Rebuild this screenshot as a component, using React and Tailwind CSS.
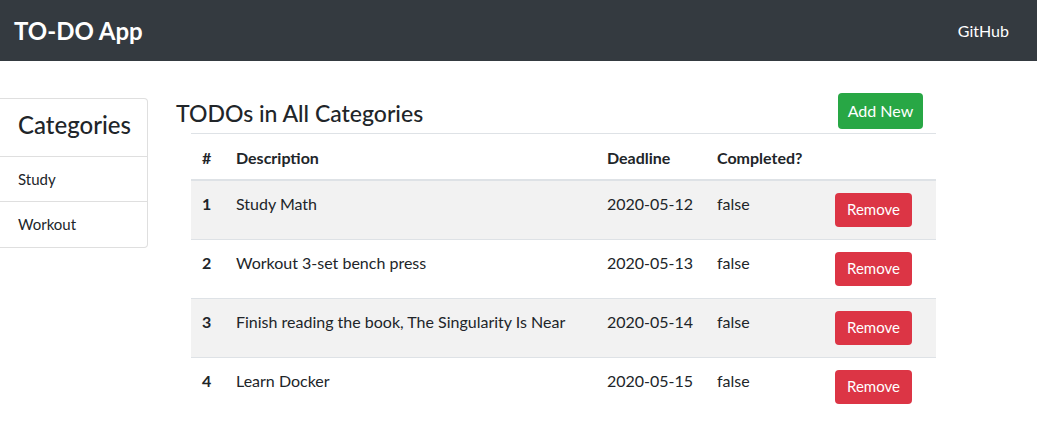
import React from "react";

const todos = [
  { id: 1, description: "Study Math", deadline: "2020-05-12", completed: "false" },
  { id: 2, description: "Workout 3-set bench press", deadline: "2020-05-13", completed: "false" },
  { id: 3, description: "Finish reading the book, The Singularity Is Near", deadline: "2020-05-14", completed: "false" },
  { id: 4, description: "Learn Docker", deadline: "2020-05-15", completed: "false" },
];

const categories = ["Study", "Workout"];

const App = () => {
  return (
    <div className="min-h-screen bg-white text-[#212529]" style={{ fontFamily: "Lato, 'Open Sans', sans-serif" }}>
      <nav className="flex h-[61px] items-center justify-between bg-[#343a40] pl-[14px] pr-[28px]">
        <span className="text-[24px] font-bold text-white">TO-DO App</span>
        <a href="#" className="text-[16px] text-white">GitHub</a>
      </nav>

      <div className="flex items-start pt-[32px]">
        <aside className="mt-[5px] w-[148px] shrink-0 rounded-r border border-l-0 border-[#dfdfdf]">
          <div className="flex h-[58px] items-center border-b border-[#dfdfdf] pb-[5px] pl-[18px]">
            <h3 className="text-[24px] font-medium">Categories</h3>
          </div>
          {categories.map((c, i) => (
            <div
              key={c}
              className={`flex h-[45px] items-center pl-[18px] text-[15px] ${i < categories.length - 1 ? "border-b border-[#dfdfdf]" : ""}`}
            >
              {c}
            </div>
          ))}
        </aside>

        <main className="ml-[28px] w-[760px]">
          <div className="flex h-[36px] items-center justify-between pr-[13px]">
            <h2 className="pt-[4px] text-[23px] font-medium">TODOs in All Categories</h2>
            <button className="h-[36px] w-[85px] rounded bg-[#28a745] text-[16px] text-white">Add New</button>
          </div>
          <table className="ml-[15px] mt-[4px] w-[745px] border-collapse text-left text-[16px]">
            <thead>
              <tr className="border-t border-b-2 border-[#dee2e6]">
                <th className="h-[46px] w-[33px] pl-[11px] pt-[3px] font-bold">#</th>
                <th className="w-[371px] pl-[12px] pt-[3px] font-bold">Description</th>
                <th className="w-[110px] pl-[12px] pt-[3px] font-bold">Deadline</th>
                <th className="w-[118px] pl-[12px] pt-[3px] font-bold">Completed?</th>
                <th></th>
              </tr>
            </thead>
            <tbody>
              {todos.map((t, i) => (
                <tr key={t.id} className={`border-t border-[#dee2e6] ${i % 2 === 0 ? "bg-[#f2f2f2]" : ""}`}>
                  <td className="pl-[11px] pt-[11px] align-top font-bold leading-6">{t.id}</td>
                  <td className="pl-[12px] pt-[11px] align-top leading-6">{t.description}</td>
                  <td className="pl-[12px] pt-[11px] align-top leading-6">{t.deadline}</td>
                  <td className="pl-[12px] pt-[11px] align-top leading-6">{t.completed}</td>
                  <td className="py-[12px] pl-[12px] align-top">
                    <button className="block h-[34px] w-[77px] rounded bg-[#dc3545] text-[15px] text-white">Remove</button>
                  </td>
                </tr>
              ))}
            </tbody>
          </table>
        </main>
      </div>
    </div>
  );
};

export default App;
